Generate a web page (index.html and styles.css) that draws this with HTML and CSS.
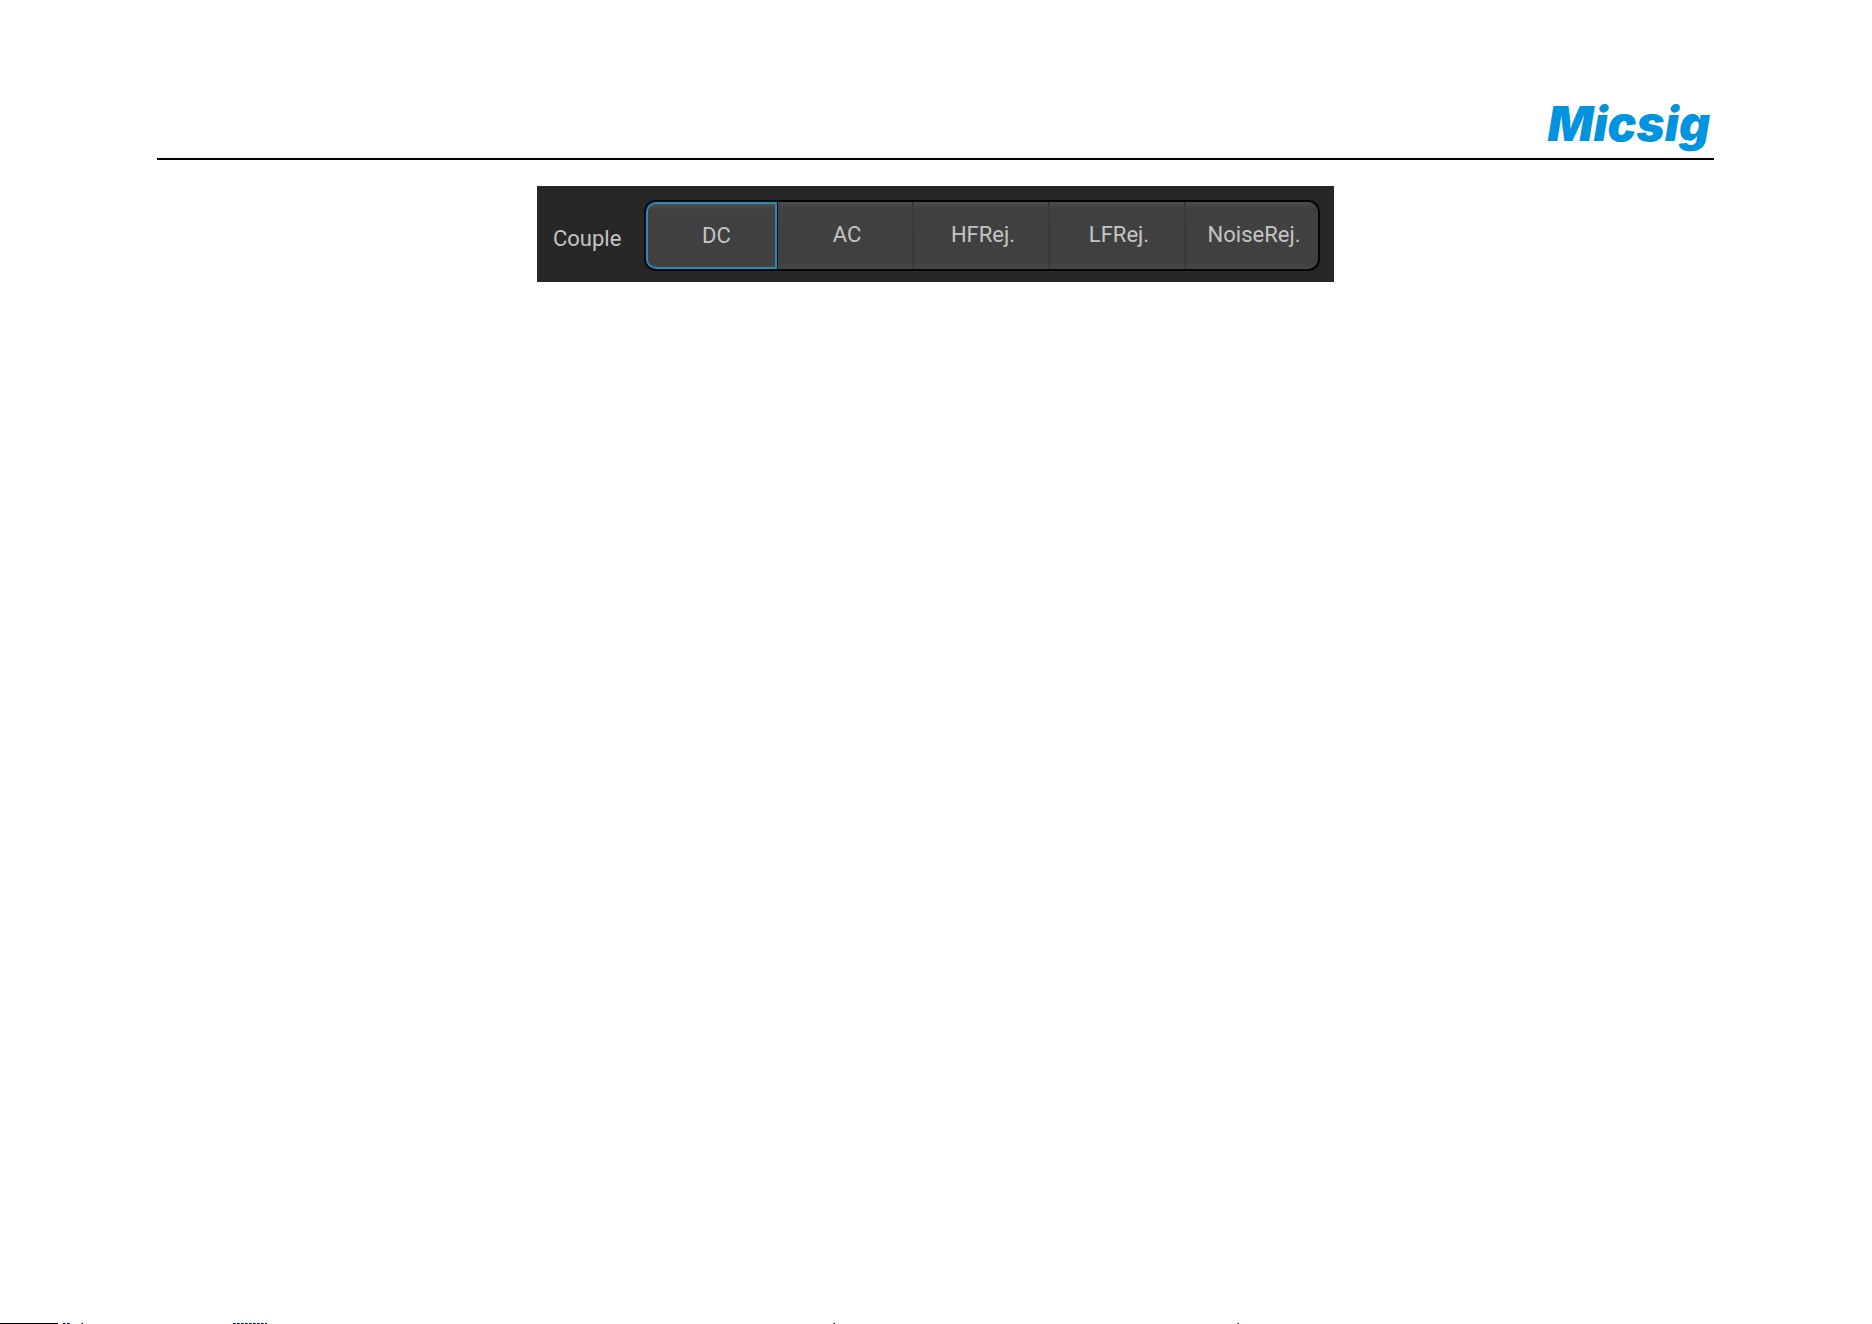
FILE: index.html
```
<!DOCTYPE html>
<html lang="en">

<head>
    <meta charset="UTF-8">
    <meta name="viewport" content="width=device-width, initial-scale=1.0">
    <title>Micsig</title>
    <link rel="stylesheet" href="styles.css">
</head>

<body>
    <header class="header">
        <span class="logo">Micsig</span>
    </header>

    <main class="main">
        <div class="panel">
            <span class="panel-title" id="couple">Couple</span>
            <div class="options" role="radiogroup" aria-labelledby="couple">
                <label class="option"><input type="radio" name="couple" checked><span>DC</span></label>
                <label class="option"><input type="radio" name="couple"><span>AC</span></label>
                <label class="option"><input type="radio" name="couple"><span>HFRej.</span></label>
                <label class="option"><input type="radio" name="couple"><span>LFRej.</span></label>
                <label class="option"><input type="radio" name="couple"><span>NoiseRej.</span></label>
            </div>
        </div>
    </main>

    <!-- thin marks along the bottom edge -->
    <footer class="edge">
        <i class="solid"></i>
        <i class="dots short"></i>
        <i class="dot"></i>
        <i class="dots long"></i>
        <i class="dot far"></i>
        <i class="dot farther"></i>
    </footer>
</body>

</html>
```
FILE: styles.css
```
* {
    margin: 0;
    padding: 0;
    box-sizing: border-box;
}

body {
    min-height: 100vh;
    display: flex;
    flex-direction: column;
    background-color: #fff;
    font-family: Roboto, "Liberation Sans", sans-serif;
}

.header {
    margin: 0 158px 0 157px;
    padding-top: 96px;
    height: 160px;
    border-bottom: 2px solid #000;
    text-align: right;
}

.logo {
    padding-right: 4px;
    font-family: Inter, "Liberation Sans", sans-serif;
    font-size: 48px;
    line-height: 56px;
    font-weight: 900;
    font-style: italic;
    color: #0093df;
}

.main {
    flex: 1;
    margin: 0 158px 0 157px;
    padding-top: 26px;
}

.panel {
    width: fit-content;
    margin: 0 auto;
    padding: 14px 14px 11px 16px;
    display: flex;
    align-items: center;
    background-color: #272727;
    color: #c4c4c4;
    font-size: 22px;
    line-height: 26px;
}

.panel-title {
    width: 91px;
    padding-top: 6px;
}

.options {
    display: flex;
    padding: 2px;
    border-radius: 12px;
    background-color: #050505;
}

.option {
    position: relative;
    width: 136px;
    height: 67px;
    padding-left: 4px;
    padding-bottom: 2px;
    display: flex;
    justify-content: center;
    align-items: center;
    background: linear-gradient(#505050, #414141 6px, #404040 60px, #464646);
    border-right: 2px solid #393939;
    cursor: pointer;
}

.option:first-child {
    width: 131px;
    margin-right: 1px;
    border-radius: 10px 0 0 10px;
}

.option:last-child {
    width: 132px;
    border-right: none;
    border-radius: 0 10px 10px 0;
}

.option input {
    position: absolute;
    opacity: 0;
}

.option:has(input:checked) {
    padding-left: 10px;
    padding-bottom: 0;
    border: 2px solid #3784ac;
    box-shadow: 0 0 2px 1px #00182c;
}

/* bottom edge */
.edge {
    height: 1px;
    display: flex;
    overflow: hidden;
}

.edge i {
    height: 1px;
    flex-shrink: 0;
}

.solid {
    width: 58px;
    background-color: #000;
}

.dots {
    background: repeating-linear-gradient(90deg, #000 0 2px, #0080ff 2px 3px, #fff 3px 4px);
}

.short {
    width: 7px;
    margin-left: 5px;
}

.long {
    width: 34px;
    margin-left: 150px;
}

.dot {
    width: 2px;
    margin-left: 11px;
    background: linear-gradient(90deg, #c08040 50%, #0000c0 50%);
}

.far {
    margin-left: 566px;
}

.farther {
    margin-left: 402px;
}
```
